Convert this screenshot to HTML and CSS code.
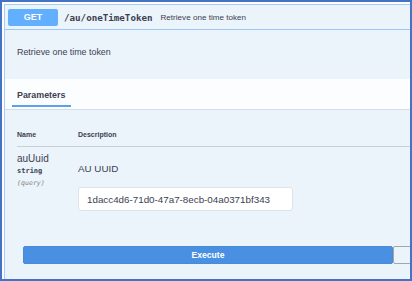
FILE: index.html
```html
<!DOCTYPE html>
<html>

<head>
    <title>API | oneTimeToken</title>
    <link rel="stylesheet" href="styles.css">
</head>

<body>
    <div class="frame">
        <div class="opblock">
            <div class="opblock-summary">
                <span class="method">GET</span>
                <span class="path">/au/oneTimeToken</span>
                <span class="summary">Retrieve one time token</span>
            </div>

            <div class="opblock-description">Retrieve one time token</div>

            <div class="section-header">
                <h4 class="tab-item">Parameters</h4>
            </div>

            <div class="params">
                <div class="params-head">
                    <span class="col-name">Name</span>
                    <span class="col-desc">Description</span>
                </div>
                <div class="params-row">
                    <div class="col-name">
                        <div class="param-name">auUuid</div>
                        <div class="param-type">string</div>
                        <div class="param-in">(query)</div>
                    </div>
                    <div class="col-desc">
                        <div class="param-desc">AU UUID</div>
                        <input class="param-input" type="text" value="1dacc4d6-71d0-47a7-8ecb-04a0371bf343" />
                    </div>
                </div>
            </div>

            <div class="execute-wrapper">
                <button class="btn-execute">Execute</button>
                <button class="btn-clear"></button>
            </div>
        </div>
    </div>
</body>

</html>
```

FILE: styles.css
```css
body {
    margin: 0;
    background-color: white;
    font-family: "Liberation Sans", Arial, sans-serif;
    color: #3b4151;
}

.frame {
    width: 412px;
    height: 281px;
    box-sizing: border-box;
    border: 2px solid #4472c4;
    padding: 2px 0 0 2px;
    overflow: hidden;
}

.opblock {
    width: 430px;
    height: 300px;
    border: 1px solid #a9cdf4;
    background-color: #ebf3fb;
}

.opblock-summary {
    display: flex;
    align-items: center;
    height: 24px;
    padding-left: 3px;
    border-bottom: 1px solid #9cc7f6;
}

.method {
    width: 50px;
    height: 17px;
    line-height: 17px;
    text-align: center;
    border-radius: 2px;
    background-color: #61affe;
    color: white;
    font-size: 9px;
    font-weight: bold;
}

.path {
    margin-left: 6px;
    font-family: "DejaVu Sans Mono", monospace;
    font-size: 9.2px;
    font-weight: bold;
}

.summary {
    margin-left: 8px;
    font-size: 8.1px;
}

.opblock-description {
    height: 49px;
    line-height: 45px;
    padding-left: 12px;
    font-size: 8.9px;
}

.section-header {
    height: 30px;
    padding-left: 7px;
    background-color: #fcfdff;
    border-bottom: 1px solid #d4dde8;
}

.tab-item {
    display: inline-block;
    margin: 0;
    width: 59px;
    height: 28px;
    line-height: 32px;
    box-sizing: border-box;
    padding-left: 5px;
    font-size: 8.9px;
    font-weight: bold;
    border-bottom: 2px solid #5ba2ee;
}

.params {
    padding-left: 12px;
}

.params-head {
    display: flex;
    align-items: flex-end;
    height: 30px;
    padding-bottom: 6px;
    line-height: 10px;
    font-size: 7px;
    font-weight: bold;
    border-bottom: 1px solid #c9d0d8;
}

.col-name {
    width: 61px;
}

.params-row {
    display: flex;
    padding-top: 6px;
}

.param-name {
    line-height: 12px;
    font-size: 10px;
}

.param-type {
    line-height: 12px;
    font-family: "DejaVu Sans Mono", monospace;
    font-size: 7px;
    font-weight: bold;
}

.param-in {
    line-height: 12px;
    font-family: "DejaVu Sans Mono", monospace;
    font-size: 6.6px;
    font-style: italic;
    color: #808080;
}

.param-desc {
    padding-top: 10px;
    line-height: 12px;
    font-size: 9.8px;
}

.param-input {
    display: block;
    margin-top: 12px;
    width: 215px;
    height: 24px;
    box-sizing: border-box;
    padding: 0 8px;
    border: 1px solid #dfe3e8;
    border-radius: 3px;
    background-color: white;
    font-family: "Liberation Sans", Arial, sans-serif;
    font-size: 9.8px;
    color: #3b4151;
    outline: 0;
}

.execute-wrapper {
    display: flex;
    margin-top: 35px;
    padding-left: 18px;
}

.btn-execute {
    width: 370px;
    height: 18px;
    padding: 0;
    border: 1px solid #4a8bd8;
    border-radius: 2px;
    background-color: #4990e2;
    color: white;
    font-family: "Liberation Sans", Arial, sans-serif;
    font-size: 8.6px;
    font-weight: bold;
}

.btn-clear {
    width: 30px;
    height: 18px;
    border: 1px solid #a3a6aa;
    border-radius: 2px;
    background-color: transparent;
}
```
